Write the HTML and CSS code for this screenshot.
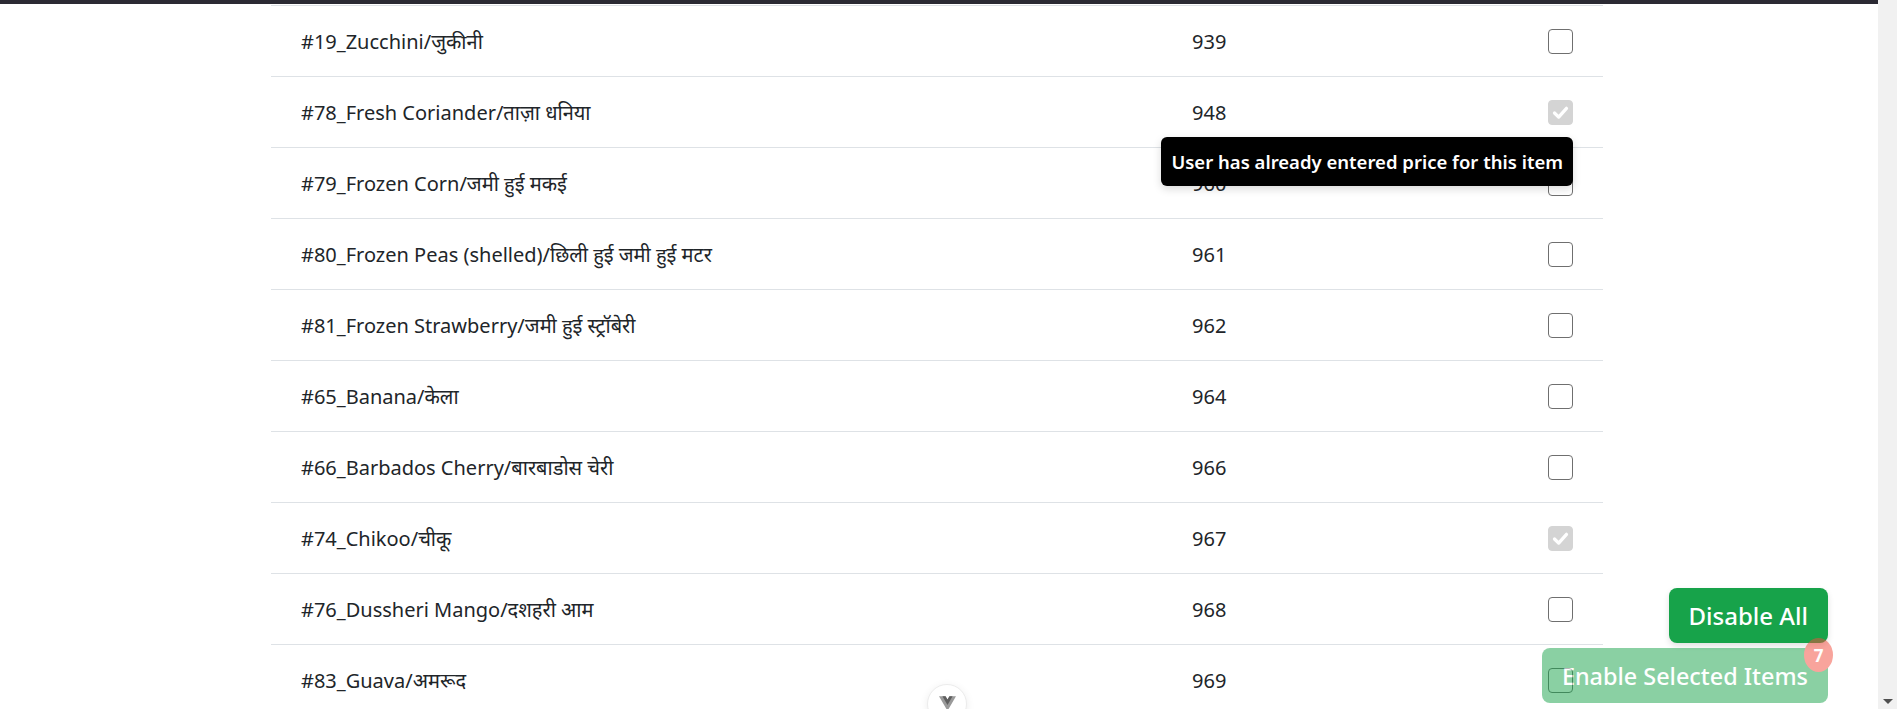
FILE: index.html
```html
<!DOCTYPE html>
<html lang="en">
<head>
  <meta charset="UTF-8">
  <meta name="viewport" content="width=device-width, initial-scale=1.0">
  <title>Item Prices</title>
  <link rel="stylesheet" href="styles.css">
</head>
<body>
  <div class="window">
    <main class="page">
      <div class="topbar"></div>

      <div class="item-list">
        <div class="item-row">
          <span class="item-name">#19_Zucchini/जुकीनी</span>
          <span class="item-code">939</span>
          <span class="item-check"><span class="check"></span></span>
        </div>
        <div class="item-row">
          <span class="item-name">#78_Fresh Coriander/ताज़ा धनिया</span>
          <span class="item-code">948</span>
          <span class="item-check">
            <span class="check locked"><svg viewBox="0 0 25 25"><polyline points="6,13 10.5,17.5 19,8"/></svg></span>
            <span class="tooltip-box">User has already entered price for this item</span>
          </span>
        </div>
        <div class="item-row">
          <span class="item-name">#79_Frozen Corn/जमी हुई मकई</span>
          <span class="item-code">960</span>
          <span class="item-check"><span class="check"></span></span>
        </div>
        <div class="item-row">
          <span class="item-name">#80_Frozen Peas (shelled)/छिली हुई जमी हुई मटर</span>
          <span class="item-code">961</span>
          <span class="item-check"><span class="check"></span></span>
        </div>
        <div class="item-row">
          <span class="item-name">#81_Frozen Strawberry/जमी हुई स्ट्रॉबेरी</span>
          <span class="item-code">962</span>
          <span class="item-check"><span class="check"></span></span>
        </div>
        <div class="item-row">
          <span class="item-name">#65_Banana/केला</span>
          <span class="item-code">964</span>
          <span class="item-check"><span class="check"></span></span>
        </div>
        <div class="item-row">
          <span class="item-name">#66_Barbados Cherry/बारबाडोस चेरी</span>
          <span class="item-code">966</span>
          <span class="item-check"><span class="check"></span></span>
        </div>
        <div class="item-row">
          <span class="item-name">#74_Chikoo/चीकू</span>
          <span class="item-code">967</span>
          <span class="item-check"><span class="check locked"><svg viewBox="0 0 25 25"><polyline points="6,13 10.5,17.5 19,8"/></svg></span></span>
        </div>
        <div class="item-row">
          <span class="item-name">#76_Dussheri Mango/दशहरी आम</span>
          <span class="item-code">968</span>
          <span class="item-check"><span class="check"></span></span>
        </div>
        <div class="item-row">
          <span class="item-name">#83_Guava/अमरूद</span>
          <span class="item-code">969</span>
          <span class="item-check"><span class="check"></span></span>
        </div>
      </div>

      <div class="floating-actions">
        <button class="btn-action">Disable All</button>
        <button class="btn-action disabled">
          Enable Selected Items
          <span class="count-badge">7</span>
        </button>
      </div>

      <button class="devtools-toggle">
        <svg viewBox="0 0 261.76 226.69">
          <path class="logo-outer" d="M161.1 0l-30.23 52.35L100.65 0H0l130.87 226.69L261.75 0z"/>
          <path class="logo-inner" d="M161.1 0l-30.23 52.35L100.65 0H52.35l78.52 136.01L209.4 0z"/>
        </svg>
      </button>
    </main>

    <div class="scrollbar">
      <span class="scroll-arrow"></span>
    </div>
  </div>
</body>
</html>
```

FILE: styles.css
```css
html, body {
  margin: 0;
  height: 100%;
  overflow: hidden;
}
body {
  font-family: "Noto Sans", "Noto Sans Devanagari", "Lohit Devanagari", "FreeSans", sans-serif;
  color: #212529;
  background: #fff;
}
.window {
  display: flex;
  height: 100vh;
}
.page {
  flex: 1;
  position: relative;
  overflow: hidden;
  padding-right: 4px;
}
.topbar {
  height: 4px;
  margin-right: -4px;
  background: #2b2a33;
}
.item-list {
  width: 1332px;
  margin: 1px auto 0;
  border-top: 1px solid #dee2e6;
}
.item-row {
  display: grid;
  grid-template-columns: 891px 356px 25px;
  align-items: center;
  height: 70px;
  padding: 0 30px;
  border-bottom: 1px solid #dee2e6;
  font-size: 20px;
}
.item-name,
.item-code {
  white-space: nowrap;
}
.item-check {
  position: relative;
  display: flex;
}
.check {
  display: block;
  width: 23px;
  height: 23px;
  border: 1px solid #6f6f6f;
  border-radius: 4px;
  background: #fff;
}
.check.locked {
  border-color: #d4d4d4;
  background: #d4d4d4;
}
.check svg {
  display: block;
  width: 23px;
  height: 23px;
}
.check polyline {
  fill: none;
  stroke: #fff;
  stroke-width: 3.6;
  stroke-linecap: round;
  stroke-linejoin: round;
}
.tooltip-box {
  position: absolute;
  top: calc(100% + 12px);
  right: 0;
  z-index: 5;
  display: flex;
  align-items: center;
  height: 49px;
  padding: 0 10px;
  border-radius: 6px;
  background: #000;
  color: #fff;
  font-size: 18.5px;
  font-weight: 600;
  white-space: nowrap;
  box-shadow: 0 3px 8px rgba(0,0,0,0.15);
}
.floating-actions {
  position: absolute;
  right: 50px;
  bottom: 6px;
  display: flex;
  flex-direction: column;
  align-items: flex-end;
  gap: 5px;
  z-index: 10;
}
.btn-action {
  position: relative;
  height: 55px;
  padding: 0 20px;
  border: none;
  border-radius: 8px;
  background: #17a34a;
  color: #fff;
  font-family: inherit;
  font-size: 24px;
  font-weight: 500;
  box-shadow: 0 3px 6px rgba(0,0,0,0.12);
}
.btn-action.disabled {
  font-size: 23.4px;
  opacity: 0.5;
  box-shadow: none;
}
.count-badge {
  position: absolute;
  top: -10px;
  right: -5px;
  display: flex;
  align-items: center;
  justify-content: center;
  width: 29px;
  height: 34px;
  border-radius: 50%;
  background: #f34b3b;
  color: #fff;
  font-size: 17px;
  font-weight: 700;
}
.devtools-toggle {
  position: absolute;
  left: 50%;
  bottom: -15px;
  margin-left: -12px;
  width: 40px;
  height: 40px;
  padding: 0;
  border: 1px solid #ececec;
  border-radius: 50%;
  background: #fff;
  box-shadow: 0 2px 8px rgba(0,0,0,0.08);
  display: flex;
  justify-content: center;
  padding-top: 11px;
}
.devtools-toggle svg {
  width: 17px;
  height: 15px;
}
.logo-outer {
  fill: #9a9a9a;
}
.logo-inner {
  fill: #5f5f5f;
}
.scrollbar {
  width: 19px;
  background: #f1f1f1;
  display: flex;
  flex-direction: column;
  justify-content: flex-end;
  align-items: center;
}
.scroll-arrow {
  width: 0;
  height: 0;
  margin-bottom: 5px;
  border-left: 5px solid transparent;
  border-right: 5px solid transparent;
  border-top: 5px solid #505050;
}
```
